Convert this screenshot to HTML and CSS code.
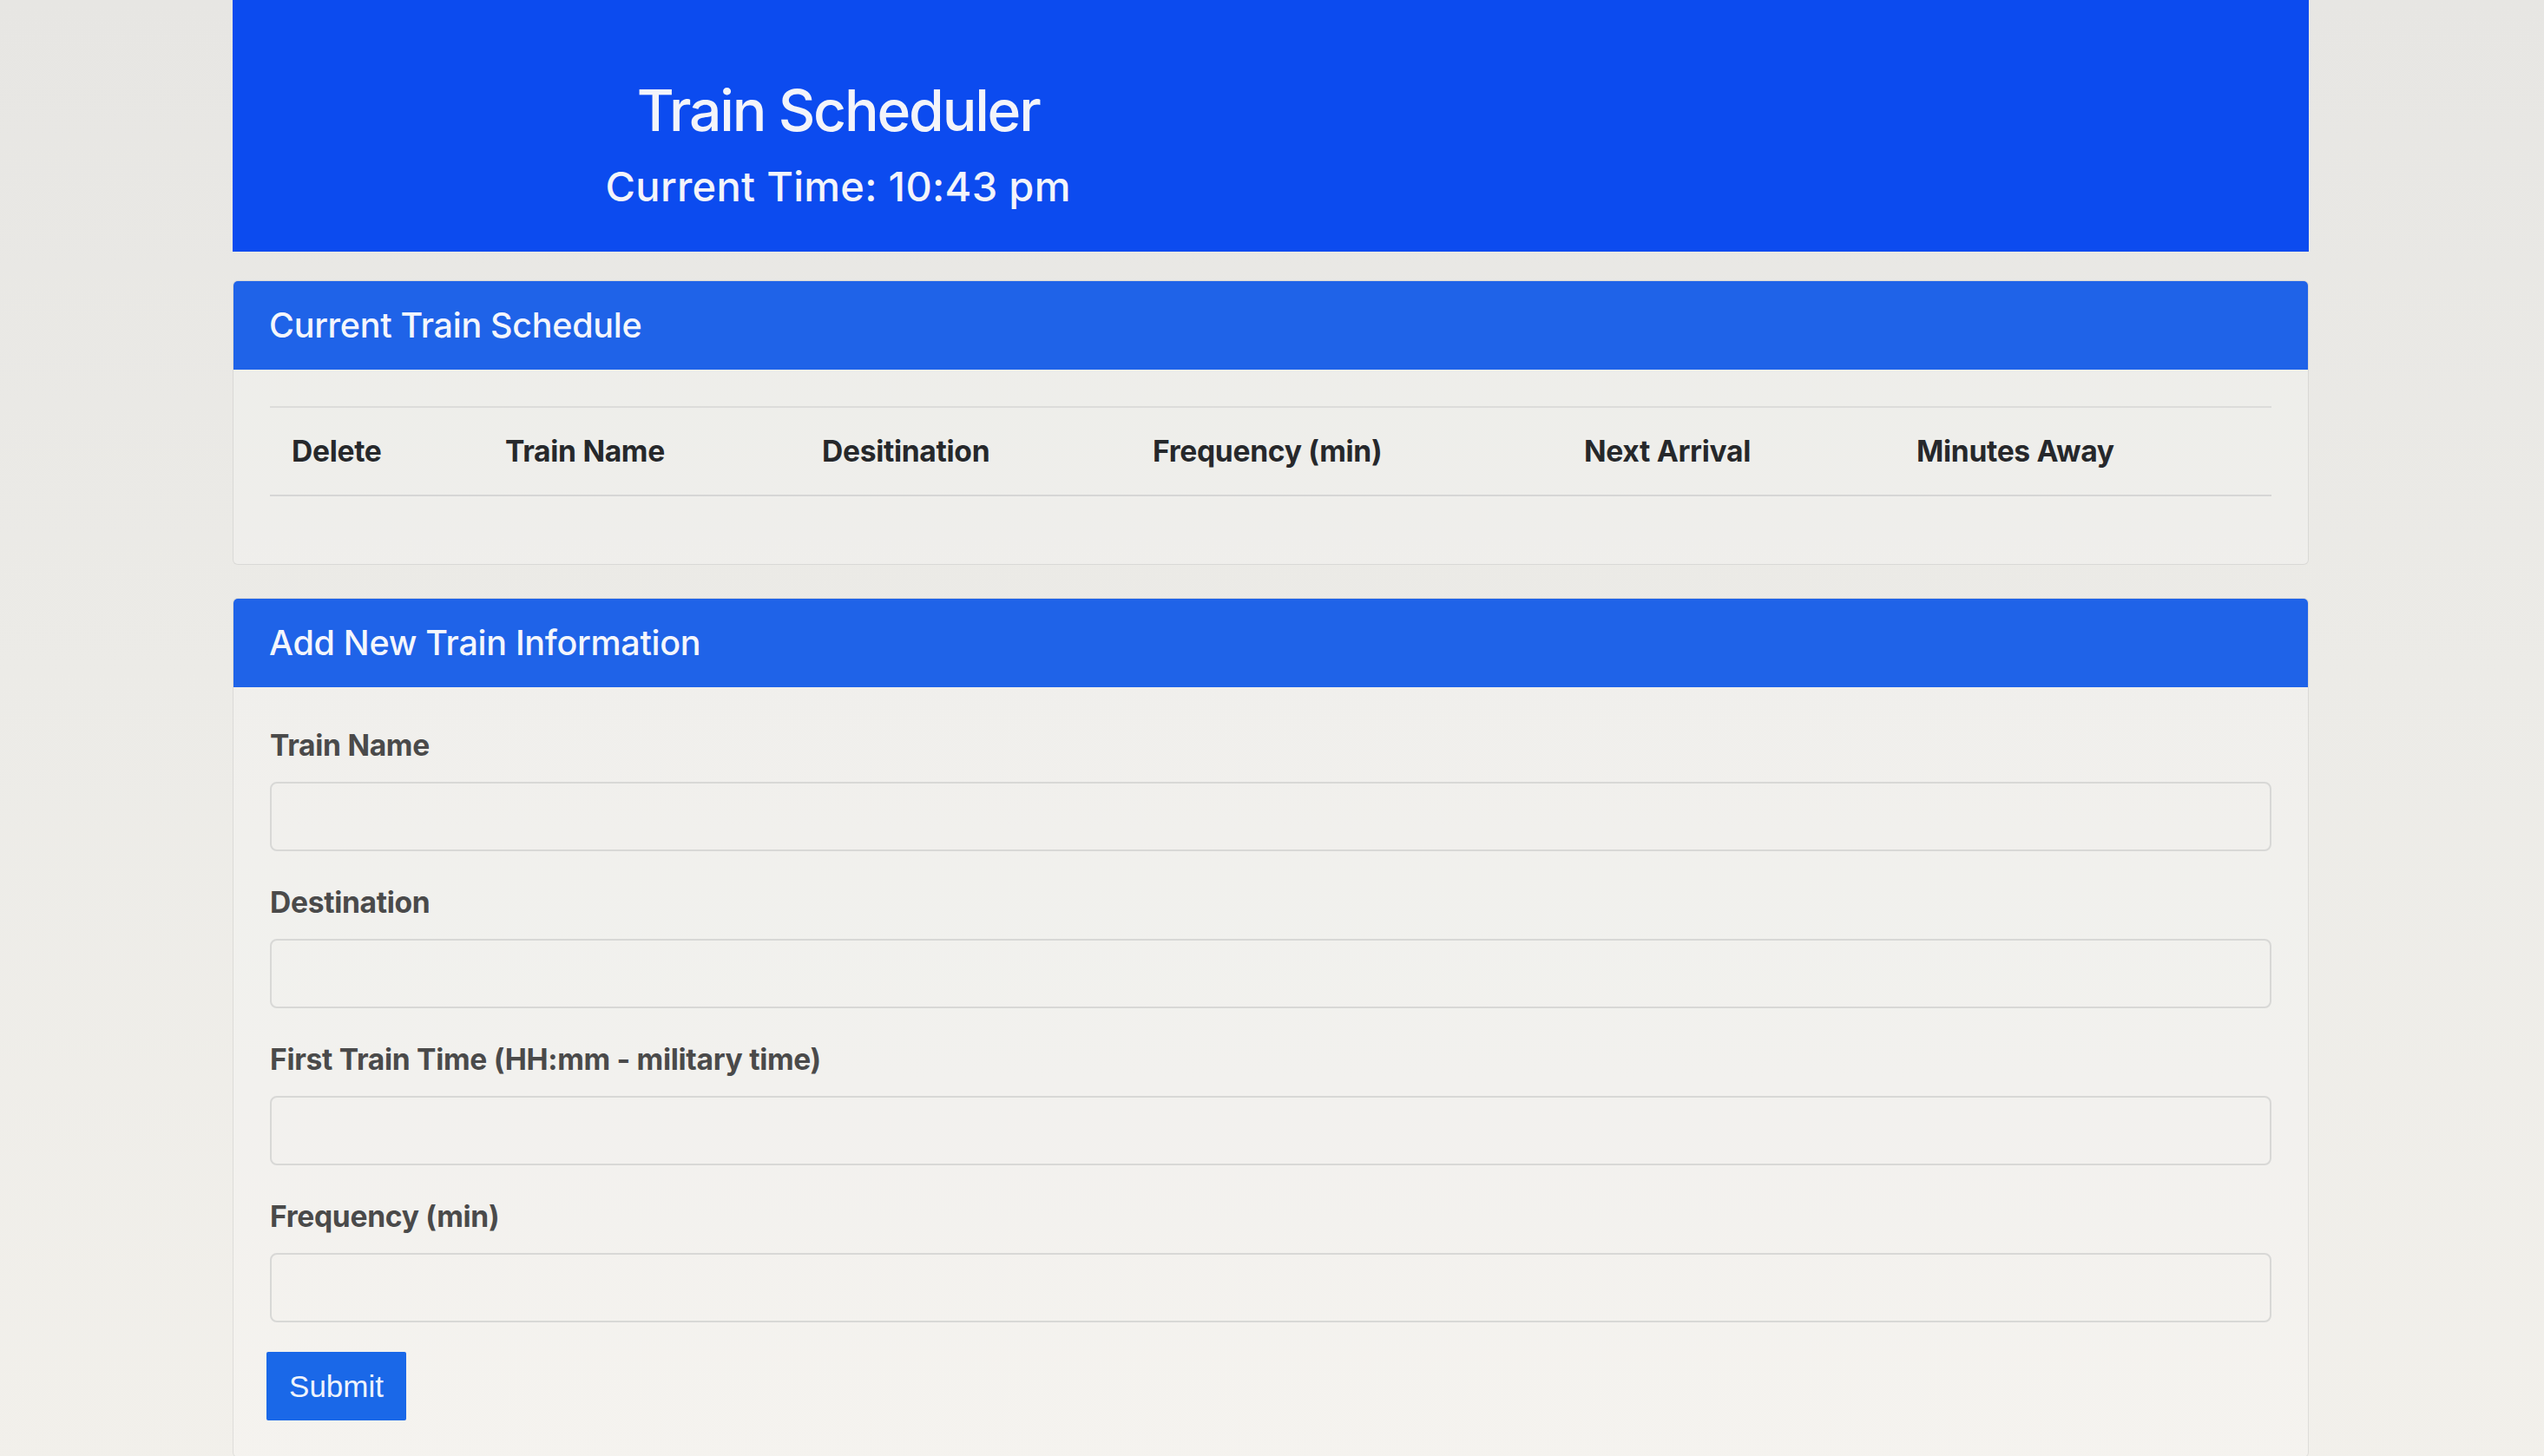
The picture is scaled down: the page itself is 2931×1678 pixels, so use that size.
FILE: index.html
```html
<!DOCTYPE html>
<html lang="en">
<head>
<meta charset="utf-8">
<title>Train Scheduler</title>
<link rel="stylesheet" href="styles.css">
</head>
<body>
<div class="container">
  <header class="banner">
    <div class="banner-col">
      <h1 class="title">Train Scheduler</h1>
      <h2 class="clock">Current Time: 10:43 pm</h2>
    </div>
  </header>

  <section class="card">
    <div class="card-header">Current Train Schedule</div>
    <div class="card-body">
      <table class="schedule">
        <thead>
          <tr>
            <th class="c-del">Delete</th>
            <th class="c-name">Train Name</th>
            <th class="c-dest">Desitination</th>
            <th class="c-freq">Frequency (min)</th>
            <th class="c-next">Next Arrival</th>
            <th class="c-away">Minutes Away</th>
          </tr>
        </thead>
        <tbody></tbody>
      </table>
    </div>
  </section>

  <section class="card">
    <div class="card-header">Add New Train Information</div>
    <div class="card-body">
      <form class="train-form">
        <div class="form-group">
          <label for="name">Train Name</label>
          <input id="name" class="form-control" type="text">
        </div>
        <div class="form-group">
          <label for="dest">Destination</label>
          <input id="dest" class="form-control" type="text">
        </div>
        <div class="form-group">
          <label for="first">First Train Time (HH:mm - military time)</label>
          <input id="first" class="form-control" type="text">
        </div>
        <div class="form-group">
          <label for="freq">Frequency (min)</label>
          <input id="freq" class="form-control" type="text">
        </div>
        <button type="button" class="btn">Submit</button>
      </form>
    </div>
  </section>
</div>
</body>
</html>
```

FILE: styles.css
```css
* { box-sizing: border-box; }

html, body {
  margin: 0;
  padding: 0;
}

body {
  font-family: Inter, "Noto Sans", "Liberation Sans", sans-serif;
  color: #212529;
  background: linear-gradient(180deg, #e7e6e3 0%, #ecebe7 45%, #f2f0eb 100%);
  min-height: 1678px;
}

.container {
  width: 2392px;
  margin: 0 0 0 268px;
  padding-bottom: 40px;
}

.banner {
  height: 290px;
  background: #0c4bef;
  color: #f3f4fa;
  display: flex;
}

.banner-col {
  width: 58.333%;
  text-align: center;
  padding-top: 88px;
}

.title {
  margin: 0 0 20px;
  font-size: 66px;
  line-height: 1.2;
  font-weight: 500;
  letter-spacing: -2.2px;
}

.clock {
  margin: 0;
  font-size: 47px;
  line-height: 1.2;
  font-weight: 500;
  letter-spacing: 0.3px;
}

.card {
  margin-top: 33px;
  border: 1px solid rgba(0, 0, 0, 0.09);
  border-radius: 6px;
  background: rgba(255, 255, 255, 0.22);
  overflow: hidden;
}

.card + .card {
  margin-top: 38px;
}

.card-header {
  height: 102px;
  background: #1f63e8;
  color: #f4f6fc;
  padding: 0 41px;
  display: flex;
  align-items: center;
  font-size: 39.5px;
  font-weight: 500;
  letter-spacing: -0.3px;
}

.card-body {
  padding: 42px;
}

.schedule {
  width: 100%;
  border-collapse: collapse;
  margin-bottom: 36px;
}

.schedule th {
  text-align: left;
  font-size: 33.6px;
  line-height: 50px;
  font-weight: 700;
  padding: 25px;
  color: #26282b;
  border-top: 2px solid #dcdcda;
  border-bottom: 2px solid #d6d6d5;
  letter-spacing: -0.3px;
}

.c-del { width: 246px; }
.c-name { width: 365px; }
.c-dest { width: 381px; }
.c-freq { width: 497px; }
.c-next { width: 383px; }
.c-away { width: auto; }

.form-group {
  margin-bottom: 34px;
}

.form-group label {
  display: block;
  font-size: 33.6px;
  line-height: 50px;
  font-weight: 700;
  color: #4a4a4a;
  margin-bottom: 17px;
  letter-spacing: -0.3px;
}

.form-control {
  display: block;
  width: 100%;
  height: 80px;
  border: 2px solid #d8d8d6;
  border-radius: 8px;
  background: transparent;
  font: inherit;
  font-size: 33.6px;
}

.btn {
  display: block;
  height: 79px;
  width: 161px;
  margin-left: -4px;
  border: none;
  border-radius: 2px;
  background: #1a68e8;
  color: #eef3fc;
  font-family: "Liberation Sans", Arial, sans-serif;
  font-size: 35px;
  padding: 0;
}
```
